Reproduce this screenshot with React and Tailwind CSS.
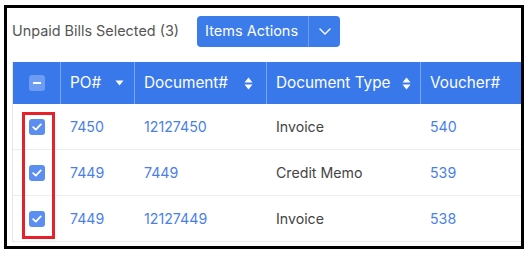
import React from "react";

const rows = [
  { po: "7450", doc: "12127450", type: "Invoice", voucher: "540" },
  { po: "7449", doc: "7449", type: "Credit Memo", voucher: "539" },
  { po: "7449", doc: "12127449", type: "Invoice", voucher: "538" },
];

function CaretDown() {
  return (
    <svg width="9" height="6" viewBox="0 0 9 6" className="ml-[14px]">
      <path d="M0.5 0.5h8L4.5 5.5z" fill="white" />
    </svg>
  );
}

function SortIcon({ className }) {
  return (
    <svg width="9" height="13" viewBox="0 0 9 13" className={className}>
      <path d="M4.5 0.5L8.5 5.5h-8z" fill="white" />
      <path d="M0.5 7.5h8L4.5 12.5z" fill="white" />
    </svg>
  );
}

function CheckBox() {
  return (
    <div className="w-4 h-4 rounded-[3px] bg-[#5b8ef0] flex items-center justify-center">
      <svg width="10" height="8" viewBox="0 0 10 8">
        <path d="M1.2 4.2L3.8 6.6L8.8 1.4" stroke="white" strokeWidth="1.8" fill="none" strokeLinecap="round" strokeLinejoin="round" />
      </svg>
    </div>
  );
}

export default function App() {
  return (
    <div className="w-[528px] h-[256px] bg-white pl-[4px] pt-[5px]" style={{ fontFamily: "Inter, 'Noto Sans', sans-serif" }}>
      <div className="w-[520px] h-[244px] border-[3px] border-black overflow-hidden relative">
        {/* toolbar */}
        <div className="flex items-center pl-[5px] pt-[6px] h-[40px]">
          <span className="text-[14.4px] text-[#555]">Unpaid Bills Selected (3)</span>
          <div className="ml-[18px] flex h-[31px] rounded-[4px] bg-[#3b7bea] text-white">
            <div className="flex items-center w-[112px] pl-[8px] text-[14.5px] border-r border-[#6d9df1]">Items Actions</div>
            <div className="flex items-center justify-center w-[31px]">
              <svg width="12" height="7" viewBox="0 0 12 7">
                <path d="M1 1l5 5 5-5" stroke="white" strokeWidth="1.4" fill="none" strokeLinecap="round" strokeLinejoin="round" />
              </svg>
            </div>
          </div>
        </div>

        {/* table */}
        <div className="ml-[5px] mt-[14px] w-[560px] border-l border-[#e5e7eb]">
          <div className="flex h-[42px] bg-[#3878ea] text-white text-[15.3px]">
            <div className="w-[48px] flex items-center justify-center border-r border-[#7ba5f2]">
              <div className="w-4 h-4 rounded-[3px] bg-[#6d9cf1] flex items-center justify-center">
                <div className="w-[8px] h-[2px] bg-white" />
              </div>
            </div>
            <div className="w-[74px] flex items-center pl-[9px] border-r border-[#7ba5f2]">
              PO#<CaretDown />
            </div>
            <div className="w-[132px] flex items-center pl-[9px] border-r border-[#7ba5f2]">
              Document#<SortIcon className="ml-[16px]" />
            </div>
            <div className="w-[154px] flex items-center pl-[9px] border-r border-[#7ba5f2]">
              Document Type<SortIcon className="ml-[12px]" />
            </div>
            <div className="flex-1 flex items-center pl-[9px]">Voucher#</div>
          </div>
          {rows.map((r, i) => (
            <div key={i} className="flex h-[46px] border-b border-[#ebedf0] text-[14.2px]">
              <div className="w-[48px] flex items-center justify-center">
                <CheckBox />
              </div>
              <div className="w-[74px] flex items-center pl-[9px] text-[#4a7fe8]">{r.po}</div>
              <div className="w-[132px] flex items-center pl-[9px] text-[#4a7fe8]">{r.doc}</div>
              <div className="w-[154px] flex items-center pl-[9px] text-[#444]">{r.type}</div>
              <div className="flex-1 flex items-center pl-[9px] text-[#4a7fe8]">{r.voucher}</div>
            </div>
          ))}
        </div>

        {/* red highlight over the checkbox column */}
        <div className="absolute left-[15px] top-[104px] w-[33px] h-[127px] border-[3px] border-[#e8202a]" />
      </div>
    </div>
  );
}
